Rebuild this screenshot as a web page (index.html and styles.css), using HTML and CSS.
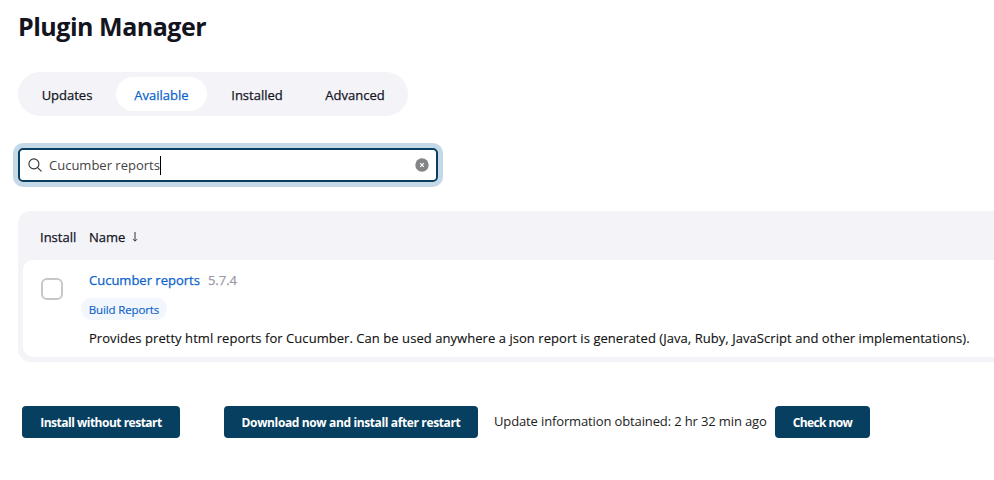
FILE: index.html
```html
<!DOCTYPE html>
<html lang="en">
<head>
<meta charset="utf-8">
<title>Plugin Manager</title>
<link rel="stylesheet" href="styles.css">
</head>
<body>
<main class="page">
  <h1 class="title"><span>Plugin Manager</span></h1>
  <nav class="tabs">
    <a class="tab tab-updates"><span>Updates</span></a>
    <a class="tab tab-available active"><span>Available</span></a>
    <a class="tab tab-installed"><span>Installed</span></a>
    <a class="tab tab-advanced"><span>Advanced</span></a>
  </nav>
  <div class="search">
    <svg class="search-icon" width="14" height="14" viewBox="0 0 14 14" fill="none" stroke="#333" stroke-width="1.1" stroke-linecap="round"><circle cx="5.9" cy="5.9" r="5"/><path d="M9.6 9.6 13.2 13.2"/></svg>
    <span class="query">Cucumber reports</span><i class="caret"></i>
    <svg class="clear" width="14" height="14" viewBox="0 0 14 14"><circle cx="7" cy="7" r="6.7" fill="#828486"/><path d="M5.2 5.2 8.8 8.8M8.8 5.2 5.2 8.8" stroke="#fff" stroke-width="1.1"/></svg>
  </div>
  <section class="table">
    <header class="head"><span class="h-install">Install</span><span class="h-name">Name</span><svg class="sort" width="6" height="10" viewBox="0 0 6 10" fill="none" stroke="#333" stroke-width="1"><path d="M3 0V9M1 7.2 3 9.2 5 7.2"/></svg></header>
    <div class="row">
      <span class="checkbox"></span>
      <div class="info">
        <div class="plugin"><a class="link">Cucumber reports</a><span class="version">5.7.4</span></div>
        <a class="tag"><span>Build Reports</span></a>
        <div class="desc">Provides pretty html reports for Cucumber. Can be used anywhere a json report is generated (Java, Ruby, JavaScript and other implementations).</div>
      </div>
    </div>
  </section>
  <footer class="actions">
    <button class="btn b-install"><span>Install without restart</span></button>
    <button class="btn b-download"><span>Download now and install after restart</span></button>
    <span class="status">Update information obtained: 2 hr 32 min ago</span>
    <button class="btn b-check"><span>Check now</span></button>
  </footer>
</main>
</body>
</html>
```
FILE: styles.css
```css
* { box-sizing: border-box; }
body { margin: 0; background: #fff; color: #14141f; font: 500 13px/20px "Open Sans", "Noto Sans", sans-serif; overflow: hidden; white-space: nowrap; }
.page { height: 480px; padding: 8px 0 0 18px; }
.title { margin: 0; height: 36px; font-size: 25px; line-height: 36px; font-weight: 700; letter-spacing: -.48px; }
.tabs { display: flex; width: 390px; height: 44px; margin-top: 28px; padding: 5px; border-radius: 22px; background: #f3f3f8; }
.tab { display: flex; align-items: center; justify-content: center; height: 34px; border-radius: 17px; padding-top: 2px; }
.tab, .h-install, .h-name, .link, .version { -webkit-text-stroke: .25px currentColor; }
.tab-updates { width: 88px; margin-right: 5px; }
.tab-available { width: 91px; margin-right: 5px; }
.tab-installed { width: 90px; margin-right: 5px; }
.tab-advanced { width: 96px; }
.active { background: #fff; color: #0b63cc; }
.search { display: flex; align-items: center; width: 420px; height: 34px; margin-top: 32px; padding: 0 7px 0 8px; border: 2px solid #093f61; border-radius: 5px; box-shadow: 0 0 0 5px #c4d8e8; }
.query { margin-left: 7px; font-weight: 400; color: #444; }
.caret { width: 1px; height: 19px; background: #000; }
.clear { margin-left: auto; }
.table { height: 151px; margin-top: 29px; padding: 0 0 5px 5px; border-radius: 13px 0 0 13px; background: #f3f3f8; }
.head { display: flex; align-items: center; height: 49px; padding: 3px 0 0 17px; }
.h-install { width: 49px; }
.sort { margin-left: 7px; }
.row { display: flex; height: 97px; padding: 10px 0 0 18px; border-radius: 10px 0 0 10px; background: #fff; }
.checkbox { width: 22px; height: 22px; margin-top: 8px; border: 2px solid #c5c9cc; border-radius: 6px; }
.info { margin-left: 26px; }
.plugin { height: 20px; }
.link { color: #0b63cc; }
.version { margin-left: 8px; color: #9a9aaa; }
.tag { display: flex; align-items: center; justify-content: center; width: 86px; height: 22px; margin: 8px 0 0 -8px; padding-top: 1px; border-radius: 11px; background: #f2f7fe; color: #0b63cc; font-size: 11.5px; letter-spacing: -.13px; -webkit-text-stroke: .15px currentColor; }
.desc { margin-top: 8px; color: #111; letter-spacing: .052px; -webkit-text-stroke: .12px currentColor; }
.actions { display: flex; align-items: center; height: 32px; margin: 44px 0 0 4px; }
.btn { flex: none; height: 32px; padding: 2px 0 0; border: 0; border-radius: 4px; background: #073f61; color: #fff; font: 700 12px/18px "Open Sans", "Noto Sans", sans-serif; letter-spacing: -.5px; }
.b-install { width: 158px; }
.b-download { width: 254px; margin-left: 44px; letter-spacing: -.37px; }
.status { flex: none; width: 297px; padding: 0 0 2px 16px; font-weight: 400; color: #222; letter-spacing: -.13px; }
.b-check { width: 95px; letter-spacing: -.6px; }
```
